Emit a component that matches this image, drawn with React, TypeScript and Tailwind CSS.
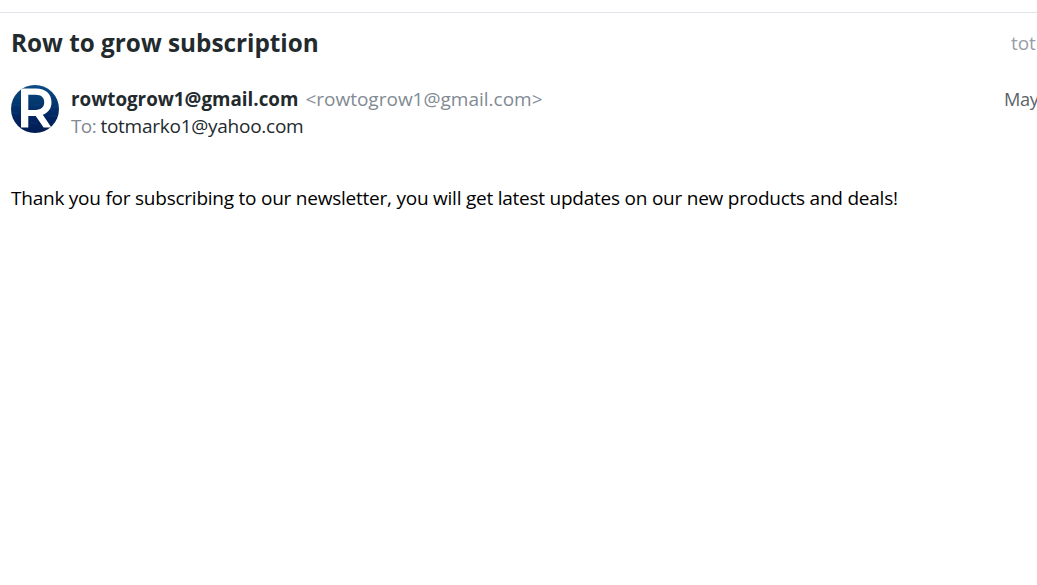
function Avatar() {
  return (
    <svg viewBox="0 0 48 48" className="h-12 w-12 shrink-0" role="img" aria-label="rowtogrow1">
      <defs>
        <linearGradient id="sea" x1="0" y1="0" x2="0" y2="1">
          <stop offset="0" stopColor="#0a4a86" />
          <stop offset="0.35" stopColor="#04386f" />
          <stop offset="0.7" stopColor="#02245f" />
          <stop offset="1" stopColor="#021c54" />
        </linearGradient>
        <clipPath id="disc">
          <circle cx="24" cy="24" r="24" />
        </clipPath>
      </defs>
      <g clipPath="url(#disc)">
        <rect width="48" height="48" fill="url(#sea)" />
        <g stroke="#1a5a94" strokeOpacity="0.4" strokeWidth="0.8" fill="none">
          <path d="M0 13h9M16 2h18M41 11h7M2 20h8M42 22h6M0 28h7M20 20h9M38 31h8M19 38h7" />
        </g>
        <path
          fill="#fff"
          fillRule="evenodd"
          d="M10 3.6H25C34.8 3.6 40.5 9 40.5 17.3C40.5 23.5 37.4 27.9 31.8 29.8L40.4 42.6H32.6L24.7 31H17.3V42.6H10ZM17.3 9.8V24.9H24.6C30.2 24.9 33.2 22.1 33.2 17.3C33.2 12.5 30.2 9.8 24.6 9.8Z"
        />
      </g>
    </svg>
  );
}

export default function App() {
  return (
    <main className="h-[585px] w-full overflow-hidden bg-white pt-3 font-['Open_Sans','Noto_Sans',sans-serif] text-[#232a2e]">
      <article className="border-t border-[#e0e4e9] px-[11px]">
        <header className="flex h-[60px] items-center justify-between">
          <h1 className="whitespace-nowrap text-[24.3px] font-bold leading-8">Row to grow subscription</h1>
          <span className="-mr-[11px] w-[26px] shrink-0 overflow-hidden whitespace-nowrap text-[19px] tracking-[-0.1px] text-[#979ea8]">tot</span>
        </header>
        <section className="flex items-start pt-3">
          <Avatar />
          <div className="ml-3 flex-1 pt-px text-[19px] leading-[27px]">
            <div className="flex whitespace-nowrap">
              <span className="text-[18.8px] font-bold">rowtogrow1@gmail.com</span>
              <span className="ml-[7px] text-[#828a93]">&lt;rowtogrow1@gmail.com&gt;</span>
            </div>
            <div className="whitespace-nowrap tracking-[-0.26px]">
              <span className="tracking-[-0.6px] text-[#828a93]">To: </span>
              <span>totmarko1@yahoo.com</span>
            </div>
          </div>
          <time className="-mr-[11px] w-[33px] shrink-0 whitespace-nowrap pt-px text-[18.2px] leading-[27px] tracking-[-0.4px] text-[#5b636a]">May</time>
        </section>
        <p className="mt-[45px] whitespace-nowrap text-[19px] leading-[27px] tracking-[-0.235px] text-black">
          Thank you for subscribing to our newsletter, you will get latest updates on our new products and deals!
        </p>
      </article>
    </main>
  );
}
